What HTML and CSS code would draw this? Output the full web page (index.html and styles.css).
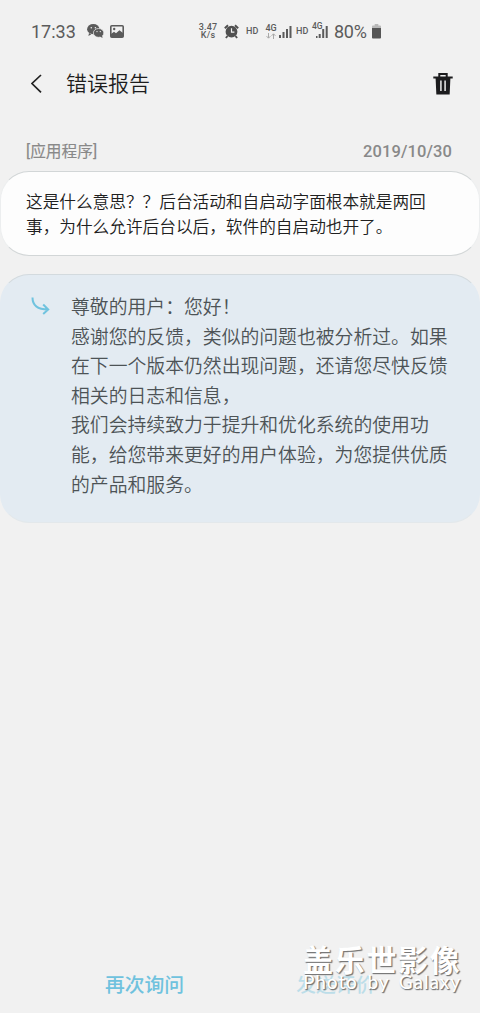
FILE: index.html
```html
<!DOCTYPE html>
<html lang="zh-CN">
<head>
<meta charset="utf-8">
<title>错误报告</title>
<link rel="stylesheet" href="styles.css">
</head>
<body>
<div class="screen">
  <div class="status">
    <span class="clock">17:33</span>
    <svg class="wechat" width="17" height="14" viewBox="0 0 17 14"><ellipse cx="6.3" cy="5.2" rx="6.2" ry="5.1" fill="#5b5b5b"/><path d="M2 9l-.6 3 3-1.8z" fill="#5b5b5b"/><ellipse cx="11.6" cy="8.9" rx="5.2" ry="4.4" fill="#5b5b5b" stroke="#f1f1f1" stroke-width=".7"/><path d="M13 12.6l2.5 1.3-.4-2.6z" fill="#5b5b5b"/><g fill="#f1f1f1"><circle cx="4.3" cy="3.8" r=".8"/><circle cx="8.4" cy="3.8" r=".8"/><circle cx="10" cy="7.6" r=".7"/><circle cx="13.3" cy="7.6" r=".7"/></g></svg>
    <svg class="photo" width="14" height="13" viewBox="0 0 14 13"><rect x=".8" y=".8" width="12.4" height="11.4" rx="1" fill="none" stroke="#5b5b5b" stroke-width="1.6"/><circle cx="4.2" cy="4" r="1.2" fill="#5b5b5b"/><path d="M1 9l3-2.2 2 1.400 3.400-3L13 8v4H1z" fill="#5b5b5b"/></svg>
    <span class="speed">3.47<br>K/s</span>
    <svg class="alarm" width="15" height="15" viewBox="0 0 15 15"><circle cx="7.5" cy="7.7" r="5.9" fill="#505050"/><path d="M.8 4.2L4 1.2M14.2 4.2L11 1.2M3.5 12l-1.6 2M11.5 12l1.6 2" stroke="#505050" stroke-width="1.9" fill="none"/><path d="M7.500 4.300v3.900h2.900" stroke="#f1f1f1" stroke-width="1.200" fill="none"/></svg>
    <span class="hd">HD</span>
    <span class="net"><span>4G</span><svg width="10" height="6" viewBox="0 0 10 6"><path d="M2.5 0v5M.6 3.2l1.9 2 1.9-2M7.5 6V1M5.6 2.8l1.9-2 1.9 2" stroke="#a8a8a8" fill="none"/></svg></span>
    <svg class="bars" width="13" height="13" viewBox="0 0 13 13"><path d="M0 10h2v3H0zM3.500 7h2v6h-2zM7 4h2v9H7zM10.500 1h2v12h-2z" fill="#5b5b5b"/></svg>
    <span class="hd second">HD</span>
    <span class="net2"><svg width="17" height="14" viewBox="0 0 17 14"><path d="M4 12h1.500v2H4zM6.700 10h2v4h-2zM10.200 5h2v9h-2zM13.700 2h2v12h-2z" fill="#5b5b5b"/></svg><b>4G</b></span>
    <span class="percent">80%</span>
    <svg class="battery" width="9" height="15" viewBox="0 0 10 15" preserveAspectRatio="none"><path d="M0 4V2.500q0-1 1-1h2V0h4v1.500h2q1 0 1 1V4z" fill="#b9b9b9"/><path d="M0 4h10v9.500q0 1-1 1H1q-1 0-1-1z" fill="#555"/></svg>
  </div>

  <header class="header">
    <svg class="back" width="12" height="20" viewBox="0 0 12 20"><path d="M10 1L1 9.500l9 8.800" fill="none" stroke="#222" stroke-width="1.700"/></svg>
    <h1 class="title">错误报告</h1>
    <svg class="trash" width="20" height="23" viewBox="0 0 20 23"><path d="M6.300 4V1h7.400v3" fill="none" stroke="#1c1c1e" stroke-width="2"/><path d="M.3 3.500h19.400v2H.3z" fill="#1c1c1e"/><path d="M3.600 5l.7 15.400h11.400L16.400 5z" fill="#1c1c1e" stroke="#1c1c1e" stroke-width="2"/><path d="M7.900 7.500v10.500M12.100 7.500v10.500" stroke="#d4d4d4" stroke-width="1.700"/></svg>
  </header>

  <div class="meta"><span class="category">[应用程序]</span><span class="date">2019/10/30</span></div>

  <section class="card question">这是什么意思？？后台活动和自启动字面根本就是两回<br>事，为什么允许后台以后，软件的自启动也开了。</section>

  <section class="card answer">
    <svg class="reply" width="20" height="18" viewBox="0 0 20 18"><path d="M1.500.5C1.500 8 6 12.500 17 12.500M12.200 7.500l5 5-5 4.500" fill="none" stroke="#70c3df" stroke-width="2"/></svg>
    <p class="message">尊敬的用户：您好！<br>感谢您的反馈，类似的问题也被分析过。如果<br>在下一个版本仍然出现问题，还请您尽快反馈<br>相关的日志和信息，<br>我们会持续致力于提升和优化系统的使用功<br>能，给您带来更好的用户体验，为您提供优质<br>的产品和服务。</p>
  </section>

  <footer class="actions">
    <span class="action">再次询问</span>
    <span class="action disabled">发送评价</span>
  </footer>
  <div class="watermark"><div class="brand">盖乐世影像</div><div class="tagline">Photo by Galaxy</div></div>
</div>
</body>
</html>
```
FILE: styles.css
```css
* { box-sizing: border-box; }
body { margin: 0; background: #f1f1f1; font-family: Roboto, "Noto Sans CJK SC", sans-serif; }
svg { display: block; flex: none; }
.screen { position: relative; width: 480px; height: 1013px; display: flex; flex-direction: column; overflow: hidden; }

.status { height: 62px; display: flex; align-items: center; padding-left: 31px; color: #5b5b5b; white-space: nowrap; }
.clock { width: 45px; font-size: 18px; }
.wechat { margin-left: 11px; }
.photo { margin-left: 6px; }
.speed { width: 20px; margin-left: 74px; font-size: 9px; line-height: 8.500px; font-weight: 500; letter-spacing: .2px; text-align: center; }
.alarm { margin-left: 6px; }
.hd { width: 13px; margin-left: 7px; font-size: 9px; font-weight: 500; }
.net { width: 12px; margin-left: 6px; display: flex; flex-direction: column; align-items: center; font-size: 9px; line-height: 9px; font-weight: 500; }
.bars { margin-left: 2px; }
.second { margin-left: 4px; }
.net2 { position: relative; width: 17px; margin-left: 3px; }
.net2 b { position: absolute; left: 0; top: -2px; font-size: 8.500px; line-height: 9px; font-weight: 500; }
.percent { width: 33px; margin-left: 5px; font-size: 18px; letter-spacing: -.3px; }
.battery { margin-left: 5px; }

.header { height: 44px; display: flex; align-items: center; padding: 0 27px 0 31px; }
.title { flex: 1; margin: 0 0 0 23px; font-size: 21px; line-height: 30px; font-weight: 350; color: #1d1d1d; }

.meta { height: 65px; padding: 36px 28px 0 26px; display: flex; justify-content: space-between; line-height: 20px; color: #898989; font-weight: 500; }
.category { font-size: 15.700px; font-weight: 400; -webkit-text-stroke: .15px #898989; }
.date { font-size: 16.500px; letter-spacing: .1px; }

.card { border: 1px solid #d2d6d7; border-left-color: #eceeef; border-right-color: #eceeef; border-radius: 29px; white-space: nowrap; }
.question { height: 85px; padding: 18px 25px; font-size: 16.670px; line-height: 25px; font-weight: 350; color: #202020; background: #fdfdfd; }
.answer { height: 249px; margin-top: 18px; padding: 19px 25px 0 30px; display: flex; background: #e3ebf2; border-color: #d3dade #e3ebf2 #e3e8eb; }
.reply { margin-top: 3px; }
.message { margin: 0 0 0 20px; font-size: 18.830px; line-height: 29.600px; font-weight: 350; color: #4d5356; }

.actions { margin-top: auto; height: 58px; padding-left: 105px; display: flex; gap: 112px; font-size: 19.800px; line-height: 62px; color: #6fc2de; font-weight: 500; }
.disabled { opacity: .4; }
.watermark { position: absolute; left: 303px; top: 940px; color: #fff; text-shadow: 1px 1px 1px #777, 1px 1px 1px #888; white-space: nowrap; }
.brand { font: 700 30px/36px "Noto Sans CJK SC", sans-serif; letter-spacing: 1.700px; }
.tagline { font: 500 19px/22px Lato, sans-serif; letter-spacing: .9px; word-spacing: 4px; margin-top: -5px; }
```
